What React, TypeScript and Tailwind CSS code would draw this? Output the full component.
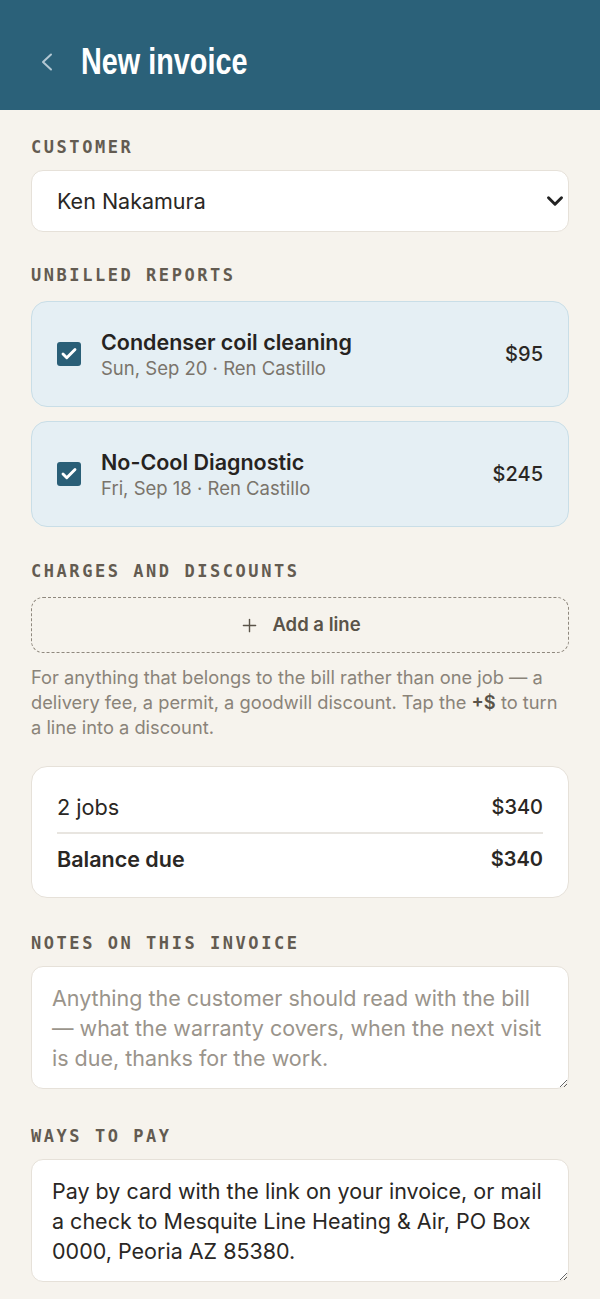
import { ChevronDown, Check, Plus } from "lucide-react";

const reports = [
  { title: "Condenser coil cleaning", meta: "Sun, Sep 20 · Ren Castillo", price: "$95" },
  { title: "No-Cool Diagnostic", meta: "Fri, Sep 18 · Ren Castillo", price: "$245" },
];

function Label({ children, className = "" }: { children: string; className?: string }) {
  return (
    <h2
      className={`font-['DejaVu_Sans_Mono',monospace] text-[17px] leading-[20px] font-bold tracking-[0.15em] text-[#635b51] ${className}`}
    >
      {children}
    </h2>
  );
}

function App() {
  return (
    <div className="min-h-screen bg-[#f6f3ed] font-['Inter',sans-serif] text-[#2a2724]">
      <header className="h-[110px] bg-[#2b6179] flex items-center pl-[41px] pt-[14px]">
        <svg width="12" height="18" viewBox="0 0 12 18" fill="none" className="text-[#b3c8d3]">
          <polyline points="10,1.5 2,9 10,16.5" stroke="currentColor" strokeWidth="2" strokeLinecap="round" strokeLinejoin="round" />
        </svg>
        <h1 className="ml-[28px] inline-block origin-left scale-x-[0.8] font-['Liberation_Sans',sans-serif] text-[36px] font-bold text-white leading-none">
          New invoice
        </h1>
      </header>

      <main className="px-[31px] pt-[27px] pb-[16px]">
        <Label className="mb-[13px]">CUSTOMER</Label>
        <div className="relative">
          <select className="w-full h-[62px] appearance-none rounded-[12px] border border-[#e6e1d9] bg-white pl-[25px] text-[21.5px] text-[#2a2724] outline-none">
            <option>Ken Nakamura</option>
          </select>
          <ChevronDown
            size={26}
            strokeWidth={2.7}
            className="pointer-events-none absolute right-[1px] top-[18px] text-[#222]"
          />
        </div>

        <Label className="mt-[33px] mb-[16px]">UNBILLED REPORTS</Label>
        <div className="flex flex-col gap-[14px]">
          {reports.map((r) => (
            <div
              key={r.title}
              className="h-[106px] rounded-[16px] border border-[#c9dee7] bg-[#e5eff4] flex items-center pl-[25px] pr-[25px]"
            >
              <span className="h-[24px] w-[24px] rounded-[3px] bg-[#2a5f77] flex items-center justify-center">
                <Check size={18} strokeWidth={3.8} className="text-white" />
              </span>
              <div className="ml-[20px] flex-1">
                <div className="text-[21.5px] leading-[28px] font-semibold text-[#26231f]">{r.title}</div>
                <div className="text-[18.5px] leading-[25px] text-[#7a746b]">{r.meta}</div>
              </div>
              <div className="text-[20px] font-medium text-[#2a2724]">{r.price}</div>
            </div>
          ))}
        </div>

        <Label className="mt-[34px] mb-[16px]">CHARGES AND DISCOUNTS</Label>
        <button className="w-full h-[56px] rounded-[12px] border border-dashed border-[#8f887e] flex items-center justify-center gap-[12px] text-[18.5px] font-semibold text-[#5a5349]">
          <Plus size={21} strokeWidth={1.6} />
          Add a line
        </button>
        <p className="mt-[12px] text-[18.3px] leading-[25px] text-[#8a8379]">
          For anything that belongs to the bill rather than one job — a delivery fee, a permit, a goodwill
          discount. Tap the <b className="font-semibold text-[#5a5349]">+$</b> to turn a line into a discount.
        </p>

        <div className="mt-[26px] rounded-[16px] border border-[#e6e1d9] bg-white px-[25px] pt-[26px] pb-[24px]">
          <div className="flex justify-between leading-[28px]">
            <span className="text-[21.7px]">2 jobs</span>
            <span className="text-[20px] font-medium">$340</span>
          </div>
          <div className="my-[11px] h-[2px] bg-[#e8e5e0]" />
          <div className="flex justify-between leading-[28px] font-semibold">
            <span className="text-[21.5px]">Balance due</span>
            <span className="text-[20px]">$340</span>
          </div>
        </div>

        <Label className="mt-[35px] mb-[13px]">NOTES ON THIS INVOICE</Label>
        <textarea
          rows={3}
          placeholder="Anything the customer should read with the bill — what the warranty covers, when the next visit is due, thanks for the work."
          className="block w-full rounded-[12px] border border-[#e6e1d9] bg-white px-[20px] py-[15.5px] text-[21.5px] leading-[30px] text-[#2a2724] placeholder:text-[#9a948b] outline-none"
        />

        <Label className="mt-[37px] mb-[13px]">WAYS TO PAY</Label>
        <textarea
          rows={3}
          defaultValue="Pay by card with the link on your invoice, or mail a check to Mesquite Line Heating & Air, PO Box 0000, Peoria AZ 85380."
          className="block w-full rounded-[12px] border border-[#e6e1d9] bg-white px-[20px] py-[15.5px] text-[21.5px] leading-[30px] text-[#2a2724] outline-none"
        />
      </main>
    </div>
  );
}

export default App;
